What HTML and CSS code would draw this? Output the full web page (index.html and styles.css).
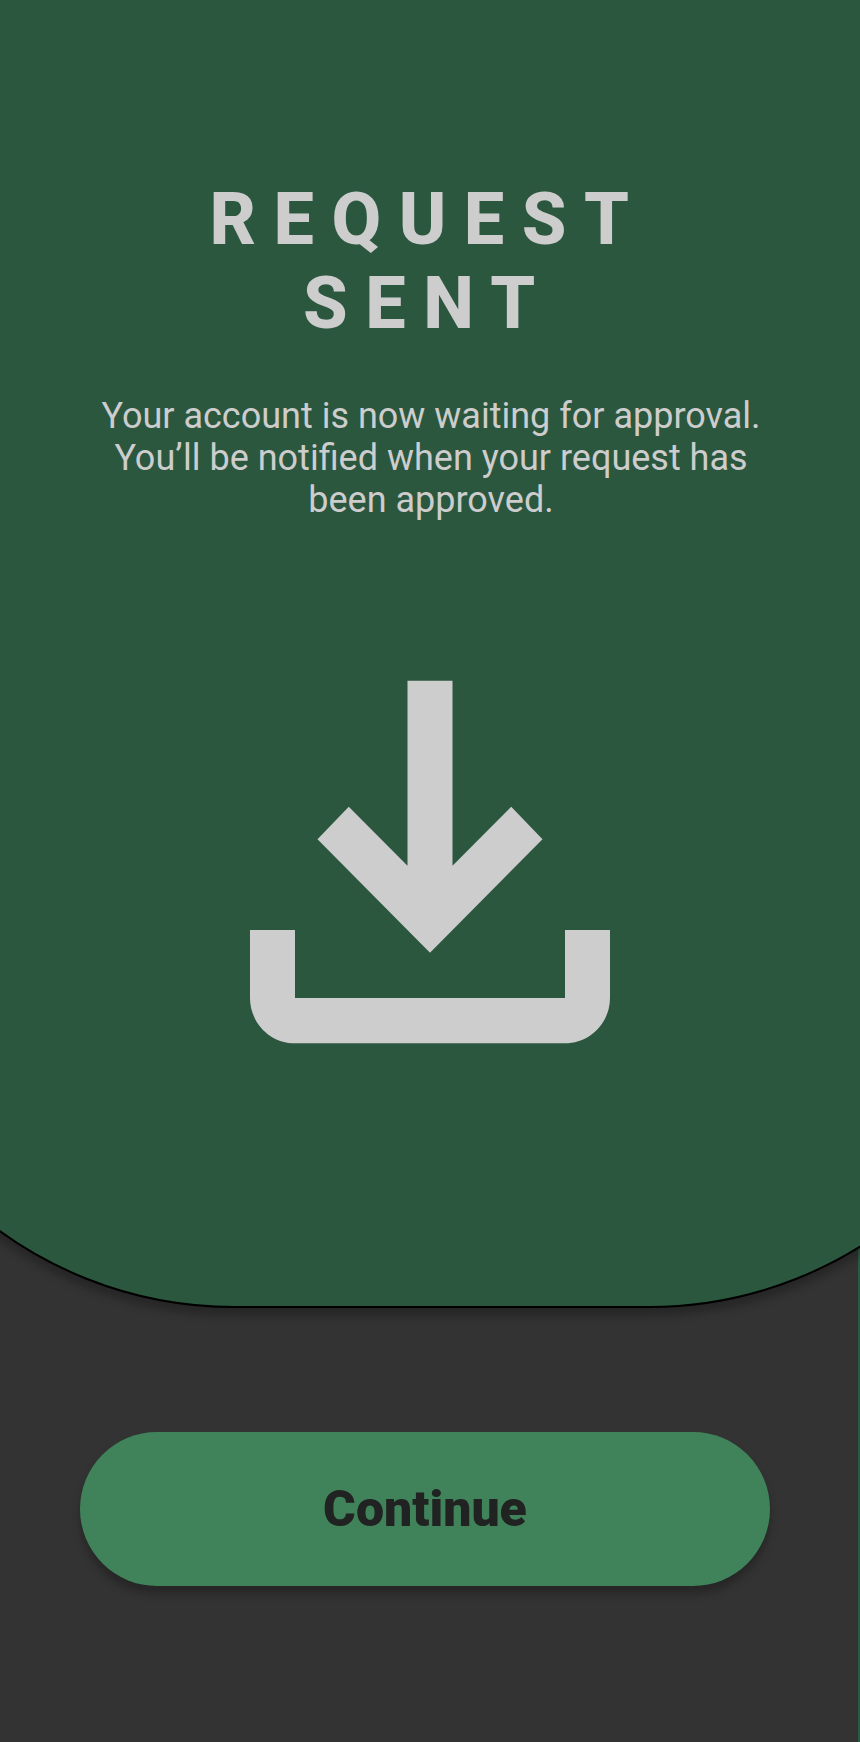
FILE: index.html
```html
<!DOCTYPE html>
<html lang="en">
<head>
<meta charset="utf-8">
<title>Request sent</title>
<link rel="stylesheet" href="styles.css">
</head>
<body>
<main class="screen">
  <section class="panel">
    <h1 class="title">REQUEST<br>SENT</h1>
    <p class="message">Your account is now waiting for approval.<br>You’ll be notified when your request has<br>been approved.</p>
    <svg class="icon" viewBox="0 0 24 24" preserveAspectRatio="none" aria-hidden="true">
      <path d="M18 15v3H6v-3H4v3c0 1.1.9 2 2 2h12c1.1 0 2-.9 2-2v-3h-2zm-1-4-1.39-1.44L13 12.17V4h-2v8.17L8.39 9.56 7 11l5 5 5-5z"/>
    </svg>
  </section>
  <button class="continue" type="button">Continue</button>
</main>
</body>
</html>
```
FILE: styles.css
```css
* { box-sizing: border-box; }

body {
  margin: 0;
  background: #2b573f;
  font-family: Roboto, "Liberation Sans", sans-serif;
}

.screen {
  width: 860px;
  height: 1742px;
  overflow: hidden;
  background: linear-gradient(to right, #333 858px, #2b5c41 858px);
}

.panel {
  display: flex;
  flex-direction: column;
  align-items: flex-start;
  width: 1215px;
  height: 1508px;
  margin: -200px 0 0 -166px;
  padding: 376px 0 0 164px;
  border: 2px solid #000;
  border-radius: 400px;
  background: #2b573f;
  box-shadow: 0 8px 8px rgba(0, 0, 0, .25);
  color: #cdcdcd;
}

.title {
  width: 860px;
  margin: 0 0 0 -2px;
  font-size: 72px;
  font-weight: 800;
  line-height: 84px;
  letter-spacing: 17.5px;
  text-align: center;
}

.message {
  width: 860px;
  margin: 49px 0 0 1px;
  font-size: 36px;
  line-height: 42px;
  text-align: center;
}

.icon {
  flex: none;
  width: 540px;
  height: 544px;
  margin: 69px 0 0 160px;
  fill: #cdcdcd;
}

.continue {
  display: block;
  width: 690px;
  height: 154px;
  margin: 124px 0 0 80px;
  padding: 0;
  border: 0;
  border-radius: 77px;
  background: #40835b;
  box-shadow: 0 8px 8px rgba(0, 0, 0, .25);
  color: #212322;
  font: 900 50px/58px Roboto, "Liberation Sans", sans-serif;
}
```
